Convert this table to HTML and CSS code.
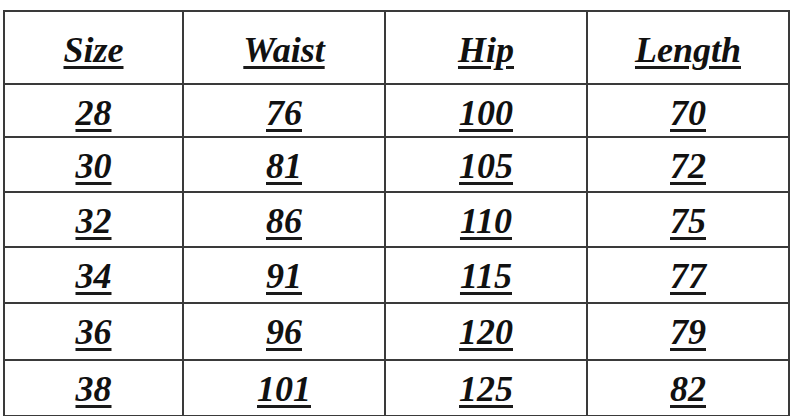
FILE: index.html
```html
<!DOCTYPE html>
<html>
<head>
<meta charset="utf-8">
<link rel="stylesheet" href="styles.css">
</head>
<body>
<div class="chart">
  <div class="cell head"><span>Size</span></div>
  <div class="cell head"><span>Waist</span></div>
  <div class="cell head"><span>Hip</span></div>
  <div class="cell head"><span>Length</span></div>

  <div class="cell"><span>28</span></div>
  <div class="cell"><span>76</span></div>
  <div class="cell"><span>100</span></div>
  <div class="cell"><span>70</span></div>

  <div class="cell"><span>30</span></div>
  <div class="cell"><span>81</span></div>
  <div class="cell"><span>105</span></div>
  <div class="cell"><span>72</span></div>

  <div class="cell"><span>32</span></div>
  <div class="cell"><span>86</span></div>
  <div class="cell"><span>110</span></div>
  <div class="cell"><span>75</span></div>

  <div class="cell"><span>34</span></div>
  <div class="cell"><span>91</span></div>
  <div class="cell"><span>115</span></div>
  <div class="cell"><span>77</span></div>

  <div class="cell"><span>36</span></div>
  <div class="cell"><span>96</span></div>
  <div class="cell"><span>120</span></div>
  <div class="cell"><span>79</span></div>

  <div class="cell"><span>38</span></div>
  <div class="cell"><span>101</span></div>
  <div class="cell"><span>125</span></div>
  <div class="cell"><span>82</span></div>
</div>
</body>
</html>
```
FILE: styles.css
```css
html, body {
  margin: 0;
  padding: 0;
  background: #ffffff;
  overflow: hidden;
}

.chart {
  margin: 10px 0 0 3px;
  display: grid;
  grid-template-columns: 179px 202px 202px 202px;
  grid-template-rows: 73px 53px 55px 55px 56px 57px 56px;
  width: max-content;
  border-left: 2px solid #3a3a3a;
  border-top: 2px solid #3a3a3a;
  font-family: "Liberation Serif", "Times New Roman", serif;
  font-weight: bold;
  font-style: italic;
  font-size: 36px;
  color: #111111;
}

.cell {
  box-sizing: border-box;
  border-right: 2px solid #3a3a3a;
  border-bottom: 2px solid #3a3a3a;
  display: flex;
  justify-content: center;
  align-items: flex-start;
  padding-top: 10px;
}

.cell.head {
  padding-top: 20px;
}

.cell span {
  line-height: 36px;
  text-decoration: underline;
  text-decoration-thickness: 3px;
  text-underline-offset: 4px;
  text-decoration-color: #1a1a1a;
}
```
